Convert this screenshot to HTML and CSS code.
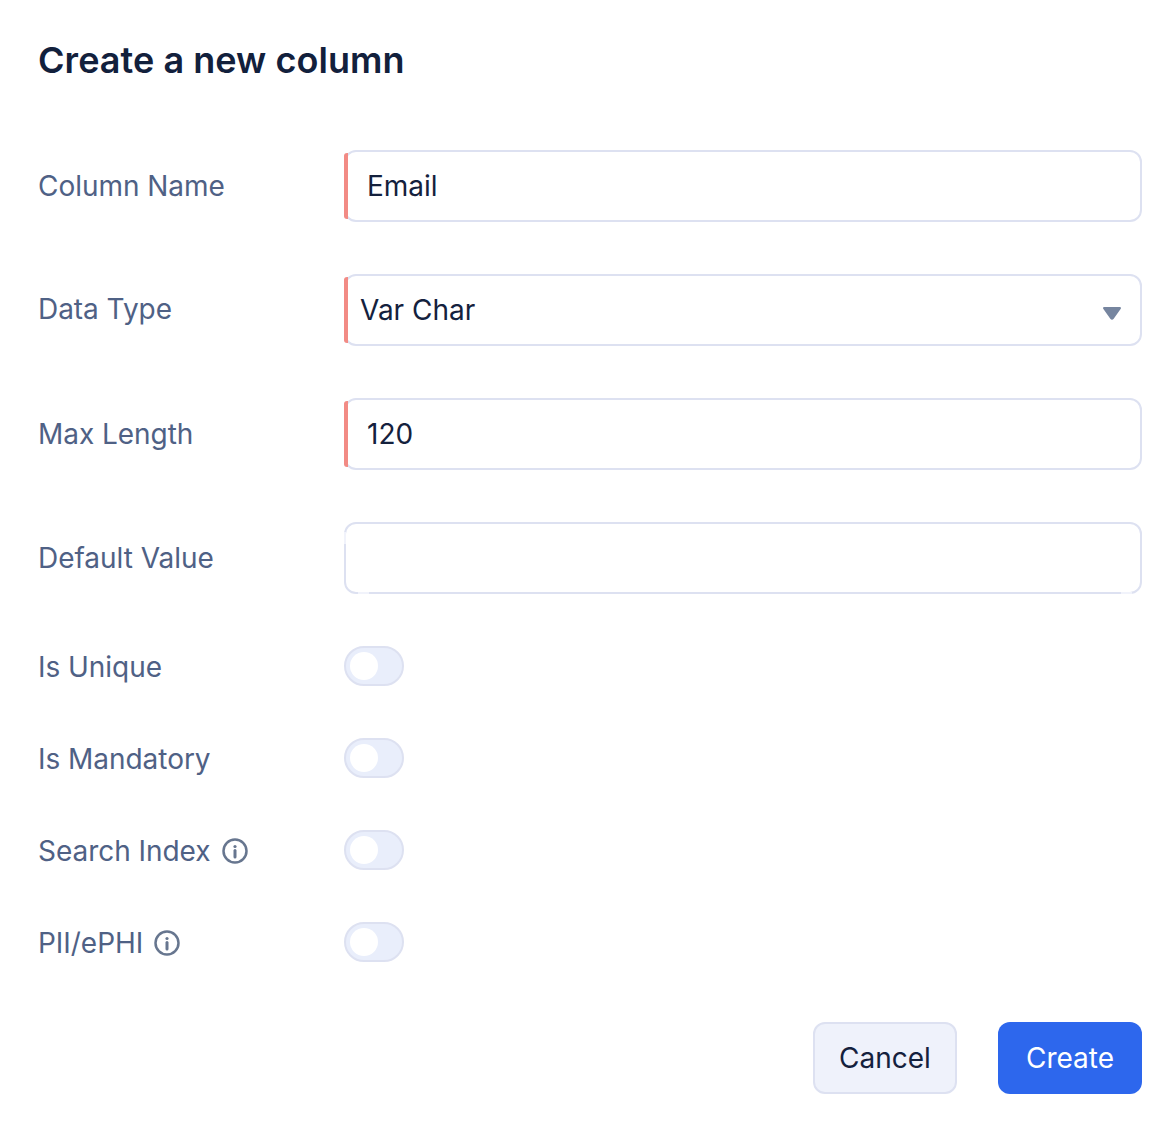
FILE: index.html
```html
<!DOCTYPE html>
<html lang="en">
<head>
    <meta charset="UTF-8">
    <title>Create a new column</title>
    <link rel="stylesheet" href="styles.css">
</head>
<body>

<div class="modal">
    <h1 class="title">Create a new column</h1>

    <div class="field-row">
        <label class="label">Column Name</label>
        <div class="input required">Email</div>
    </div>
    <div class="field-row">
        <label class="label label-up">Data Type</label>
        <div class="input required select">
            <span>Var Char</span>
            <svg class="caret" width="18" height="13" viewBox="0 0 18 13"><path d="M1.200 0h15.600c1 0 1.500 1.200.8 1.900l-6.900 9.900c-1 1.200-2.400 1.200-3.400 0L.4 1.900C-.3 1.200.2 0 1.200 0z"/></svg>
        </div>
    </div>
    <div class="field-row">
        <label class="label">Max Length</label>
        <div class="input required">120</div>
    </div>
    <div class="field-row">
        <label class="label">Default Value</label>
        <div class="input empty"></div>
    </div>

    <div class="toggles">
        <div class="toggle-row">
            <label class="label label-down">Is Unique</label>
            <div class="toggle"><span class="knob"></span></div>
        </div>
        <div class="toggle-row">
            <label class="label label-down">Is Mandatory</label>
            <div class="toggle"><span class="knob"></span></div>
        </div>
        <div class="toggle-row">
            <label class="label label-down">Search Index
                <svg class="info" width="26" height="26" viewBox="0 0 26 26"><circle cx="13" cy="13" r="11.500"/><circle class="dot" cx="13" cy="8.500" r="1.600"/><path d="M13 12.500v6.500"/></svg>
            </label>
            <div class="toggle"><span class="knob"></span></div>
        </div>
        <div class="toggle-row">
            <label class="label label-down">PII/ePHI
                <svg class="info" width="26" height="26" viewBox="0 0 26 26"><circle cx="13" cy="13" r="11.500"/><circle class="dot" cx="13" cy="8.500" r="1.600"/><path d="M13 12.500v6.500"/></svg>
            </label>
            <div class="toggle"><span class="knob"></span></div>
        </div>
    </div>

    <div class="actions">
        <button class="btn btn-cancel">Cancel</button>
        <button class="btn btn-create">Create</button>
    </div>
</div>

</body>
</html>
```

FILE: styles.css
```css
* {
    margin: 0;
    padding: 0;
    box-sizing: border-box;
}

body {
    background: #fff;
    font-family: 'Inter', sans-serif;
    color: #14213d;
}

.modal {
    padding: 38px 34px 0 38px;
}

.title {
    font-size: 36px;
    line-height: 44px;
    font-weight: 600;
    letter-spacing: 0.05px;
    color: #12203c;
    margin-bottom: 68px;
}

.field-row {
    display: flex;
    align-items: center;
    margin-bottom: 52px;
}

.label {
    display: flex;
    align-items: center;
    gap: 11px;
    width: 306px;
    flex-shrink: 0;
    font-size: 28px;
    letter-spacing: -0.04px;
    color: #4f6185;
}

.label-up {
    padding-bottom: 2px;
}

.label-down {
    padding-top: 2px;
}

.input {
    position: relative;
    flex: 1;
    height: 72px;
    display: flex;
    align-items: center;
    padding-left: 21px;
    border: 2px solid #dde1f1;
    border-radius: 12px;
    font-size: 28px;
    color: #14213d;
}

/* red bar sits over the left border */
.input.required::before {
    content: '';
    position: absolute;
    left: -2px;
    top: 1px;
    bottom: 1px;
    width: 4px;
    background: #f28b85;
    border-radius: 3px 0 0 3px;
}

/* faded patches on the empty field's border */
.input.empty::before {
    content: '';
    position: absolute;
    left: -2px;
    top: 8px;
    width: 2px;
    height: 12px;
    background: #f1f3fb;
}

.input.empty::after {
    content: '';
    position: absolute;
    left: 12px;
    bottom: -2px;
    width: 11px;
    height: 2px;
    background: #f1f3fb;
    box-shadow: 763px 0 0 #f1f3fb;
}

.select {
    justify-content: space-between;
    padding-left: 14px;
    padding-right: 19px;
}

.caret {
    margin-top: 7px;
}

.caret path {
    fill: #76859f;
}

.toggles {
    display: flex;
    flex-direction: column;
    gap: 52px;
}

.toggle-row {
    display: flex;
    align-items: center;
    height: 40px;
}

.toggle {
    width: 60px;
    height: 40px;
    padding: 4px;
    background: #e9eefb;
    border: 2px solid #dde1f1;
    border-radius: 20px;
}

.knob {
    display: block;
    width: 28px;
    height: 28px;
    background: #fff;
    border-radius: 50%;
}

.info circle {
    fill: none;
    stroke: #67768f;
    stroke-width: 2.500;
}

.info .dot {
    fill: #67768f;
    stroke: none;
}

.info path {
    fill: none;
    stroke: #67768f;
    stroke-width: 3;
    stroke-linecap: round;
}

.actions {
    display: flex;
    justify-content: flex-end;
    gap: 41px;
    margin-top: 60px;
}

.btn {
    height: 72px;
    border-radius: 12px;
    font-family: 'Inter', sans-serif;
    font-size: 28px;
}

.btn-cancel {
    width: 144px;
    background: #eff2fb;
    border: 2px solid #dde1f1;
    color: #14213d;
}

.btn-create {
    width: 144px;
    background: #2d67ed;
    border: none;
    color: #fff;
}
```
